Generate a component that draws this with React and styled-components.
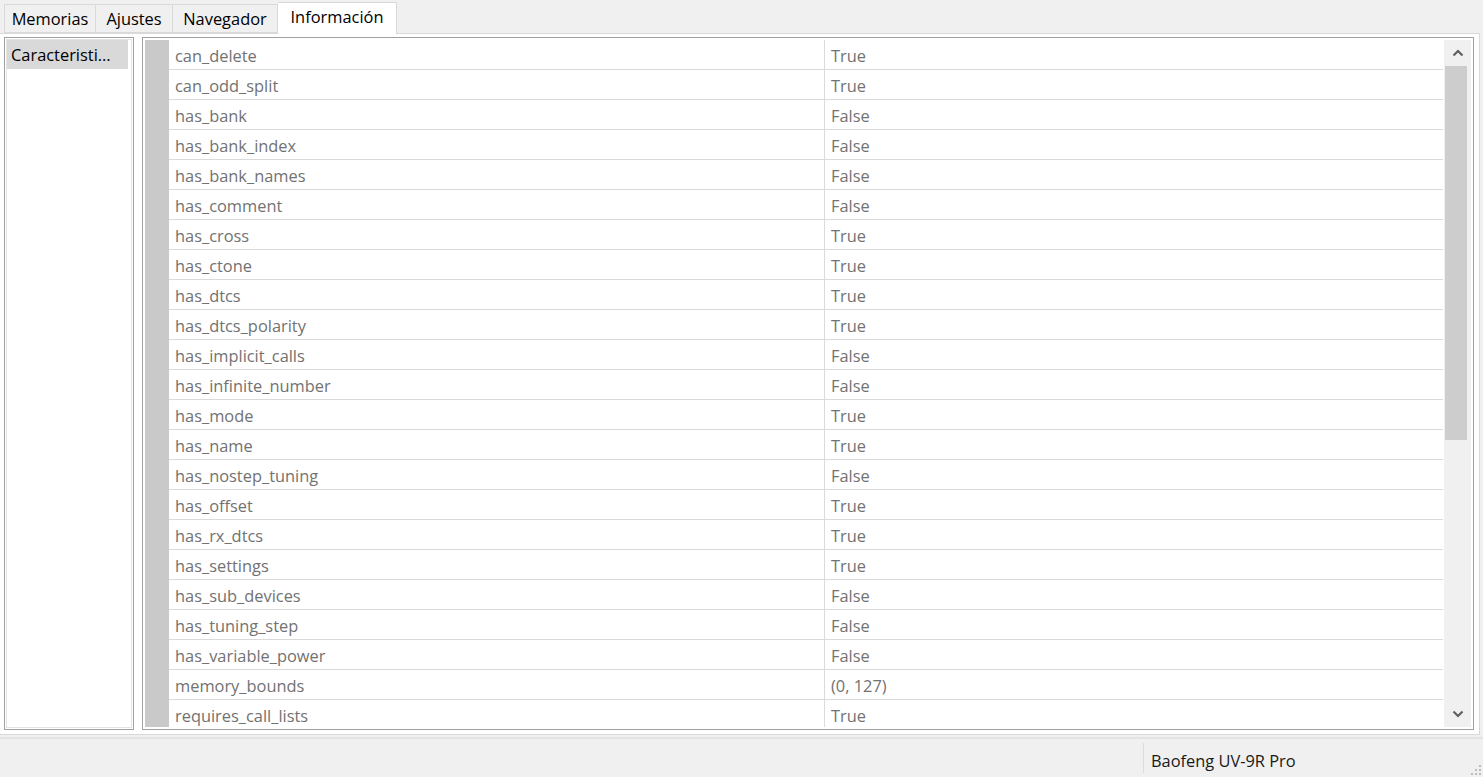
import React from "react";
import styled, { createGlobalStyle } from "styled-components";

const GlobalStyle = createGlobalStyle`
  html, body {
    margin: 0;
    padding: 0;
    background: #f0f0f0;
  }
  body {
    font-family: "Open Sans", "Noto Sans", sans-serif;
    font-size: 16.4px;
  }
`;

const rows = [
  ["can_delete", "True"],
  ["can_odd_split", "True"],
  ["has_bank", "False"],
  ["has_bank_index", "False"],
  ["has_bank_names", "False"],
  ["has_comment", "False"],
  ["has_cross", "True"],
  ["has_ctone", "True"],
  ["has_dtcs", "True"],
  ["has_dtcs_polarity", "True"],
  ["has_implicit_calls", "False"],
  ["has_infinite_number", "False"],
  ["has_mode", "True"],
  ["has_name", "True"],
  ["has_nostep_tuning", "False"],
  ["has_offset", "True"],
  ["has_rx_dtcs", "True"],
  ["has_settings", "True"],
  ["has_sub_devices", "False"],
  ["has_tuning_step", "False"],
  ["has_variable_power", "False"],
  ["memory_bounds", "(0, 127)"],
  ["requires_call_lists", "True"],
];

const tabs = [
  { label: "Memorias", width: 92 },
  { label: "Ajustes", width: 77 },
  { label: "Navegador", width: 105 },
  { label: "Información", width: 119 },
];

const Window = styled.div`
  width: 1483px;
  height: 777px;
  display: flex;
  flex-direction: column;
  overflow: hidden;
  background: #f0f0f0;
`;

const TabBar = styled.div`
  display: flex;
  align-items: flex-end;
  height: 33px;
  padding-left: 4px;
  box-sizing: border-box;
`;

const Tab = styled.div`
  width: ${(p) => p.w}px;
  height: ${(p) => (p.active ? "32px" : "29px")};
  display: flex;
  align-items: center;
  justify-content: center;
  box-sizing: border-box;
  color: #000;
  background: ${(p) => (p.active ? "#fff" : "#f0f0f0")};
  border: 1px solid #d9d9d9;
  border-left: ${(p) => (p.first ? "1px solid #d9d9d9" : "none")};
  border-bottom: ${(p) => (p.active ? "none" : "1px solid #d9d9d9")};
  margin-bottom: ${(p) => (p.active ? "-1px" : "0")};
  padding-bottom: ${(p) => (p.active ? "4px" : "0")};
  position: relative;
  z-index: ${(p) => (p.active ? 1 : 0)};
`;

const Pane = styled.div`
  flex: 1;
  display: flex;
  gap: 8px;
  padding: 3px 5px 4px 4px;
  border: 1px solid #d9d9d9;
  border-left: none;
  margin-right: 3px;
  background: #fff;
  min-height: 0;
`;

const ListBox = styled.div`
  width: 130px;
  box-sizing: border-box;
  border: 1px solid #a0a0a0;
  box-shadow: inset 0 0 0 1px #fff, inset 0 0 0 2px #e3e3e3;
  padding: 2px 5px 2px 2px;
  background: #fff;
`;

const ListItem = styled.div`
  height: 29px;
  line-height: 29px;
  padding-left: 4px;
  background: ${(p) => (p.selected ? "#d9d9d9" : "transparent")};
  color: #000;
  white-space: nowrap;
  overflow: hidden;
`;

const Table = styled.div`
  flex: 1;
  display: flex;
  box-sizing: border-box;
  border: 1px solid #a0a0a0;
  box-shadow: inset 0 0 0 1px #fff;
  padding: 2px;
  background: #fff;
  min-width: 0;
`;

const RowHeader = styled.div`
  width: 24px;
  background: #c9c9c9;
  flex-shrink: 0;
`;

const Grid = styled.div`
  flex: 1;
  overflow: hidden;
`;

const Row = styled.div`
  display: grid;
  grid-template-columns: 656px 1fr;
  height: 30px;
  box-sizing: border-box;
  border-bottom: 1px solid #dadada;
`;

const Cell = styled.div`
  display: flex;
  align-items: center;
  padding-left: 6px;
  padding-top: 1px;
  color: #727272;
  border-right: ${(p) => (p.divider ? "1px solid #dadada" : "none")};
  white-space: nowrap;
`;

const ScrollBar = styled.div`
  width: 27px;
  flex-shrink: 0;
  background: #f0f0f0;
  display: flex;
  flex-direction: column;
  border-left: 1px solid #fff;
`;

const ArrowButton = styled.div`
  height: 26px;
  display: flex;
  align-items: center;
  justify-content: center;
  flex-shrink: 0;
`;

const Track = styled.div`
  flex: 1;
  padding: 0 4px 0 1px;
  display: flex;
  flex-direction: column;
`;

const Thumb = styled.div`
  height: 374px;
  background: #cdcdcd;
`;

const StatusBar = styled.div`
  height: 38px;
  margin-top: 2px;
  border-top: 2px solid #e3e3e3;
  display: flex;
  align-items: center;
  justify-content: flex-end;
  position: relative;
`;

const StatusField = styled.div`
  width: 340px;
  height: 30px;
  display: flex;
  align-items: center;
  padding-left: 7px;
  padding-top: 4px;
  border-left: 1px solid #dcdcdc;
  color: #1a1a1a;
  box-sizing: border-box;
`;

const Grip = styled.svg`
  position: absolute;
  right: 1px;
  bottom: 1px;
`;

const Chevron = ({ up }) => (
  <svg width="12" height="8" viewBox="0 0 12 8">
    <path
      d={up ? "M1.5 6.5 L6 2 L10.5 6.5" : "M1.5 1.5 L6 6 L10.5 1.5"}
      fill="none"
      stroke="#606060"
      strokeWidth="2.2"
    />
  </svg>
);

export default function App() {
  return (
    <Window>
      <GlobalStyle />
      <TabBar>
        {tabs.map((t, i) => (
          <Tab key={t.label} w={t.width} first={i === 0} active={i === 3}>
            {t.label}
          </Tab>
        ))}
      </TabBar>
      <Pane>
        <ListBox>
          <ListItem selected>Caracteristi...</ListItem>
        </ListBox>
        <Table>
          <RowHeader />
          <Grid>
            {rows.map(([k, v]) => (
              <Row key={k}>
                <Cell divider>{k}</Cell>
                <Cell>{v}</Cell>
              </Row>
            ))}
          </Grid>
          <ScrollBar>
            <ArrowButton>
              <Chevron up />
            </ArrowButton>
            <Track>
              <Thumb />
            </Track>
            <ArrowButton>
              <Chevron />
            </ArrowButton>
          </ScrollBar>
        </Table>
      </Pane>
      <StatusBar>
        <StatusField>Baofeng UV-9R Pro</StatusField>
        <Grip width="12" height="12" viewBox="0 0 12 12">
          {[
            [9, 1],
            [9, 5],
            [5, 5],
            [9, 9],
            [5, 9],
            [1, 9],
          ].map(([x, y]) => (
            <rect key={`${x}-${y}`} x={x} y={y} width="2" height="2" fill="#bdbdbd" />
          ))}
        </Grip>
      </StatusBar>
    </Window>
  );
}
